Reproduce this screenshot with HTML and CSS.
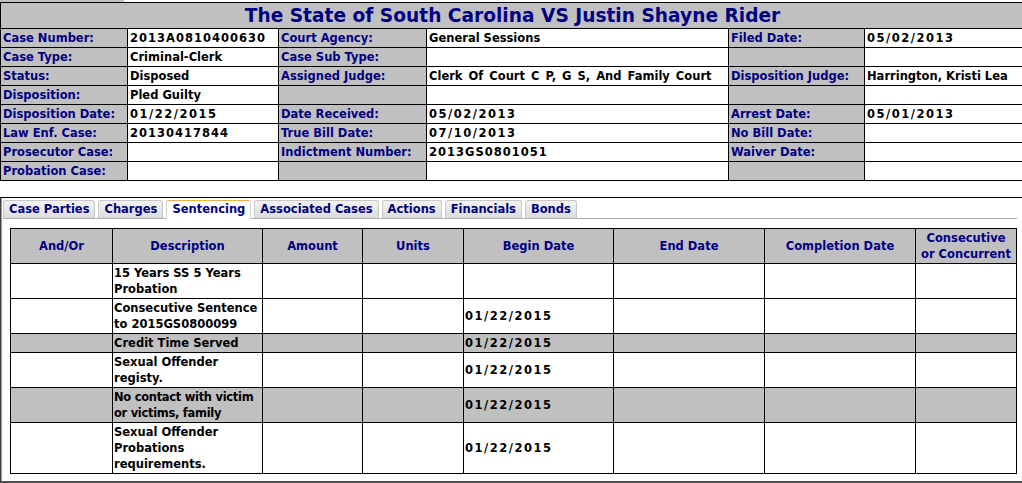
FILE: index.html
```
<!DOCTYPE html>
<html lang="en">
<head>
    <meta charset="UTF-8">
    <title>Case Details</title>
    <link rel="stylesheet" href="styles.css">
</head>
<body>
<div class="stub"></div>
<table class="case">
    <colgroup>
        <col style="width:127px"><col style="width:151px"><col style="width:148px">
        <col style="width:302px"><col style="width:136px"><col style="width:160px">
    </colgroup>
    <tr><th colspan="6" class="title">The State of South Carolina VS Justin Shayne Rider</th></tr>
    <tr><td class="lbl">Case Number:</td><td class="num">2013A0810400630</td><td class="lbl">Court Agency:</td><td>General Sessions</td><td class="lbl">Filed Date:</td><td class="date">05/02/2013</td></tr>
    <tr><td class="lbl">Case Type:</td><td>Criminal-Clerk</td><td class="lbl">Case Sub Type:</td><td></td><td class="lbl"></td><td></td></tr>
    <tr><td class="lbl">Status:</td><td>Disposed</td><td class="lbl">Assigned Judge:</td><td class="wide">Clerk Of Court C P, G S, And Family Court</td><td class="lbl">Disposition Judge:</td><td>Harrington, Kristi Lea</td></tr>
    <tr><td class="lbl">Disposition:</td><td>Pled Guilty</td><td class="lbl"></td><td></td><td class="lbl"></td><td></td></tr>
    <tr><td class="lbl">Disposition Date:</td><td class="date">01/22/2015</td><td class="lbl">Date Received:</td><td class="date">05/02/2013</td><td class="lbl">Arrest Date:</td><td class="date">05/01/2013</td></tr>
    <tr><td class="lbl">Law Enf. Case:</td><td class="num">20130417844</td><td class="lbl">True Bill Date:</td><td class="date">07/10/2013</td><td class="lbl">No Bill Date:</td><td></td></tr>
    <tr><td class="lbl">Prosecutor Case:</td><td></td><td class="lbl">Indictment Number:</td><td class="num">2013GS0801051</td><td class="lbl">Waiver Date:</td><td></td></tr>
    <tr><td class="lbl">Probation Case:</td><td></td><td class="lbl"></td><td></td><td class="lbl"></td><td></td></tr>
</table>

<div class="panel">
    <ul class="tabs">
        <li>Case Parties</li>
        <li>Charges</li>
        <li class="active">Sentencing</li>
        <li>Associated Cases</li>
        <li>Actions</li>
        <li>Financials</li>
        <li>Bonds</li>
    </ul>
    <table class="sentence">
        <colgroup>
            <col style="width:102px"><col style="width:150px"><col style="width:100px"><col style="width:101px">
            <col style="width:150px"><col style="width:151px"><col style="width:151px"><col style="width:101px">
        </colgroup>
        <tr>
            <th>And/Or</th><th>Description</th><th>Amount</th><th>Units</th>
            <th>Begin Date</th><th>End Date</th><th>Completion Date</th><th class="narrow">Consecutive or Concurrent</th>
        </tr>
        <tr><td></td><td>15 Years SS 5 Years Probation</td><td></td><td></td><td></td><td></td><td></td><td></td></tr>
        <tr><td></td><td>Consecutive Sentence to 2015GS0800099</td><td></td><td></td><td class="date">01/22/2015</td><td></td><td></td><td></td></tr>
        <tr class="grey"><td></td><td>Credit Time Served</td><td></td><td></td><td class="date">01/22/2015</td><td></td><td></td><td></td></tr>
        <tr><td></td><td>Sexual Offender registy.</td><td></td><td></td><td class="date">01/22/2015</td><td></td><td></td><td></td></tr>
        <tr class="grey"><td></td><td class="tight">No contact with victim or victims, family</td><td></td><td></td><td class="date">01/22/2015</td><td></td><td></td><td></td></tr>
        <tr><td></td><td>Sexual Offender Probations requirements.</td><td></td><td></td><td class="date">01/22/2015</td><td></td><td></td><td></td></tr>
    </table>
</div>
</body>
</html>
```

FILE: styles.css
```
html {
    overflow: hidden;
}

body {
    margin: 0;
    padding: 0;
    background-color: white;
    font-family: "DejaVu Sans", Verdana, sans-serif;
    font-size: 11.5px;
    font-weight: bold;
    color: black;
}

.stub {
    width: 124px;
    height: 2px;
    background-color: #c0c0c0;
}

.case {
    border-collapse: collapse;
    table-layout: fixed;
    width: 1024px;
}

.case td,
.case th {
    border: 1px solid black;
    padding: 0 2px;
    line-height: 18px;
    white-space: nowrap;
    overflow: hidden;
    text-align: left;
}

.case .title {
    background-color: #c0c0c0;
    color: #000080;
    text-align: center;
    font-size: 18.6px;
    line-height: 25px;
}

.case .lbl {
    background-color: #c0c0c0;
    color: #000080;
}

.num {
    letter-spacing: 1px;
}

.date {
    letter-spacing: 1.5px;
}

.wide {
    word-spacing: 2px;
}

.panel {
    margin-top: 16px;
    width: 1030px;
    border-top: 1px solid black;
    border-left: 1px solid #404040;
    border-bottom: 2px solid #505050;
    box-shadow: inset 1px 0 0 #a0a0a0;
    padding: 2px 0 7px 2px;
}

.tabs {
    display: flex;
    gap: 3px;
    list-style: none;
    margin: 0;
    padding: 0;
    width: 1014px;
    border-bottom: 1px solid #aaaaaa;
}

.tabs li {
    height: 17px;
    line-height: 17px;
    padding: 0 5px;
    margin-bottom: -1px;
    border: 1px solid #c8c8c8;
    border-bottom: 1px solid #aaaaaa;
    border-radius: 3px 3px 0 0;
    background: linear-gradient(#f2f2f2, #dcdcdc);
    color: #000080;
}

.tabs li.active {
    background: white;
    border-color: #d0d0d0;
    border-top-color: #f0b040;
    border-bottom-color: white;
}

.sentence {
    border-collapse: collapse;
    table-layout: fixed;
    width: 1006px;
    margin: 9px 0 0 7px;
}

.sentence th,
.sentence td {
    border: 1px solid black;
    padding: 1px 1px;
    line-height: 16px;
    vertical-align: middle;
    text-align: left;
}

.sentence th {
    background-color: #c0c0c0;
    color: #000080;
    text-align: center;
    height: 30px;
}

.sentence th.narrow {
    padding: 1px 5px;
}

.sentence .tight {
    letter-spacing: -0.3px;
}

.sentence .grey td {
    background-color: #c0c0c0;
}
```
